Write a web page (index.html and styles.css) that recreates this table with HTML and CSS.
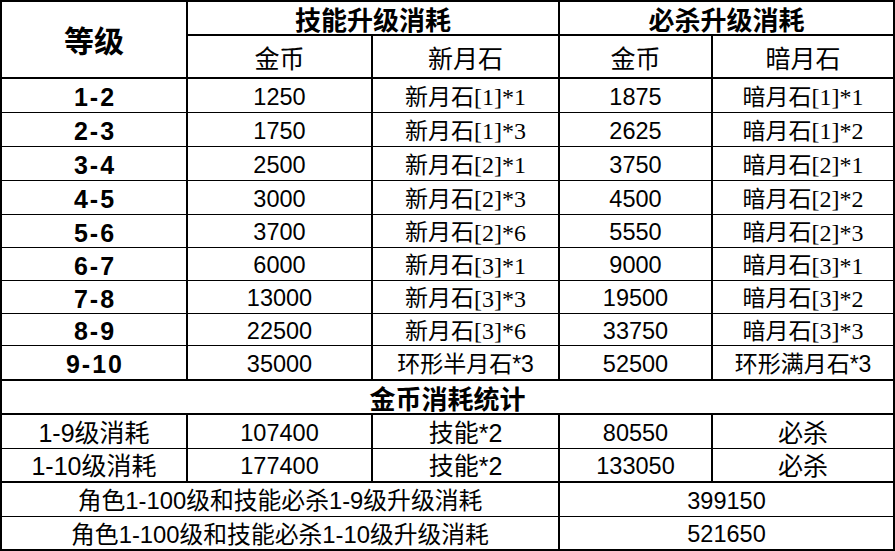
FILE: index.html
```html
<!DOCTYPE html>
<html lang="zh-CN">
<head>
<meta charset="utf-8">
<title>升级消耗</title>
<link rel="stylesheet" href="styles.css">
</head>
<body>
<div class="sheet">
  <div class="c hd lv">等级</div>
  <div class="c hd g1">技能升级消耗</div>
  <div class="c hd g2">必杀升级消耗</div>
  <div class="c sub">金币</div>
  <div class="c sub">新月石</div>
  <div class="c sub">金币</div>
  <div class="c sub">暗月石</div>

  <div class="c t lvl">1-2</div><div class="c t num">1250</div><div class="c t">新月石<span class="sf">[1]*1</span></div><div class="c t num">1875</div><div class="c t">暗月石<span class="sf">[1]*1</span></div>
  <div class="c t lvl">2-3</div><div class="c t num">1750</div><div class="c t">新月石<span class="sf">[1]*3</span></div><div class="c t num">2625</div><div class="c t">暗月石<span class="sf">[1]*2</span></div>
  <div class="c t lvl">3-4</div><div class="c t num">2500</div><div class="c t">新月石<span class="sf">[2]*1</span></div><div class="c t num">3750</div><div class="c t">暗月石<span class="sf">[2]*1</span></div>
  <div class="c t lvl">4-5</div><div class="c t num">3000</div><div class="c t">新月石<span class="sf">[2]*3</span></div><div class="c t num">4500</div><div class="c t">暗月石<span class="sf">[2]*2</span></div>
  <div class="c t lvl">5-6</div><div class="c t num">3700</div><div class="c t">新月石<span class="sf">[2]*6</span></div><div class="c t num">5550</div><div class="c t">暗月石<span class="sf">[2]*3</span></div>
  <div class="c t lvl">6-7</div><div class="c t num">6000</div><div class="c t">新月石<span class="sf">[3]*1</span></div><div class="c t num">9000</div><div class="c t">暗月石<span class="sf">[3]*1</span></div>
  <div class="c t lvl">7-8</div><div class="c t num">13000</div><div class="c t">新月石<span class="sf">[3]*3</span></div><div class="c t num">19500</div><div class="c t">暗月石<span class="sf">[3]*2</span></div>
  <div class="c t lvl">8-9</div><div class="c t num">22500</div><div class="c t">新月石<span class="sf">[3]*6</span></div><div class="c t num">33750</div><div class="c t">暗月石<span class="sf">[3]*3</span></div>
  <div class="c lvl">9-10</div><div class="c num">35000</div><div class="c">环形半月石<span class="ss">*3</span></div><div class="c num">52500</div><div class="c">环形满月石<span class="ss">*3</span></div>

  <div class="c hd full">金币消耗统计</div>

  <div class="c t st">1-9级消耗</div><div class="c t num">107400</div><div class="c t st">技能*2</div><div class="c t num">80550</div><div class="c t st">必杀</div>
  <div class="c st">1-10级消耗</div><div class="c num">177400</div><div class="c st">技能*2</div><div class="c num">133050</div><div class="c st">必杀</div>

  <div class="c t st wide">角色1-100级和技能必杀1-9级升级消耗</div><div class="c t num wide2">399150</div>
  <div class="c st wide">角色1-100级和技能必杀1-10级升级消耗</div><div class="c num wide2">521650</div>
</div>
</body>
</html>
```

FILE: styles.css
```css
html, body {
  margin: 0;
  padding: 0;
  background: #ffffff;
}

.sheet {
  display: grid;
  grid-template-columns: 186px 185px 187px 153px 182px;
  grid-template-rows: 34px 43px 34px 34px 34px 34px 33px 33px 33px 32px 35px 34px 34px 34px 34px 34px;
  width: 895px;
  height: 551px;
  box-sizing: border-box;
  border-top: 2px solid #000;
  border-left: 2px solid #000;
  font-family: "Liberation Sans", "Noto Sans CJK SC", sans-serif;
  color: #000;
}

.c {
  box-sizing: border-box;
  border-right: 2px solid #000;
  border-bottom: 2px solid #000;
  display: flex;
  align-items: center;
  justify-content: center;
  white-space: nowrap;
  font-size: 23px;
  line-height: 1;
  padding-top: 3px;
}

.c.t {
  border-bottom-width: 1px;
}

.hd {
  font-weight: bold;
  font-size: 26px;
  padding-top: 6px;
}

.hd.lv {
  grid-row: 1 / 3;
  grid-column: 1;
  font-size: 30px;
  padding-top: 4px;
}

.g1 {
  grid-row: 1;
  grid-column: 2 / 4;
}

.g2 {
  grid-row: 1;
  grid-column: 4 / 6;
}

.sub {
  font-size: 25px;
  padding-top: 5px;
}

.lvl {
  font-weight: bold;
  font-size: 25px;
  letter-spacing: 2px;
  padding-left: 2px;
  padding-top: 4px;
}

.num {
  font-size: 23.5px;
  padding-top: 4px;
}

.sf {
  font-family: "Liberation Serif", serif;
  font-size: 24px;
}

.ss {
  font-family: "Liberation Sans", sans-serif;
}

.st {
  font-size: 25px;
}

.full {
  grid-column: 1 / 6;
}

.wide {
  grid-column: 1 / 4;
  font-size: 23.8px;
}

.wide2 {
  grid-column: 4 / 6;
}
```
